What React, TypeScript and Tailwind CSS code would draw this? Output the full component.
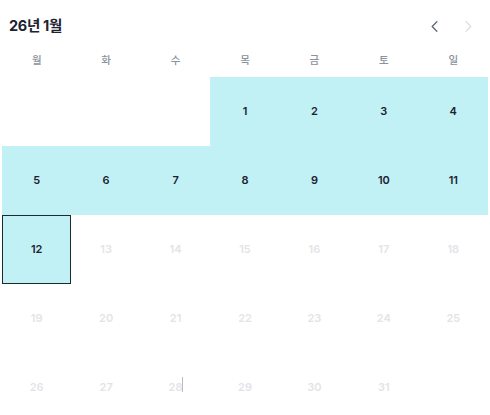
import { ChevronLeft, ChevronRight } from "lucide-react";

const WEEKDAYS = ["월", "화", "수", "목", "금", "토", "일"];

type Day = { day: number | null; inRange: boolean; selected: boolean; disabled: boolean };

const buildDays = (): Day[] => {
	const days: Day[] = [];
	for (let i = 0; i < 3; i++) days.push({ day: null, inRange: false, selected: false, disabled: false });
	for (let d = 1; d <= 31; d++) {
		days.push({ day: d, inRange: d <= 12, selected: d === 12, disabled: d > 12 });
	}
	return days;
};

const DayCell = ({ day, inRange, selected, disabled }: Day) => {
	if (day === null) return <div className="h-[69px]" />;
	return (
		<div
			className={`relative flex h-[69px] items-center justify-center text-[11px] font-semibold ${
				inRange ? "bg-[#c1f0f5]" : ""
			} ${selected ? "border border-[#1f2a30]" : ""} ${
				disabled ? "text-[#e3e4e8]" : "text-[#1c2230]"
			}`}
		>
			<span className="relative">
				{day}
				{day === 28 && <span className="absolute right-0 top-[-2px] h-[15px] w-px bg-[#b8bcc4]" />}
			</span>
		</div>
	);
};

export default function App() {
	const days = buildDays();
	return (
		<div className="h-[415px] w-[490px] overflow-hidden bg-white font-['Inter','Noto_Sans_CJK_KR',sans-serif]">
			<div className="flex h-[48px] items-center justify-between pl-[9px] pr-[12px] pt-[4px]">
				<h2 className="text-[14.5px] font-bold tracking-[-0.3px] text-[#1c2230]">26년 1월</h2>
				<div className="flex items-center gap-[15px]">
					<ChevronLeft size={19} strokeWidth={1.5} className="text-[#5b6270]" />
					<ChevronRight size={19} strokeWidth={1.5} className="text-[#dcdee2]" />
				</div>
			</div>
			<div className="grid grid-cols-7 px-[2px]">
				{WEEKDAYS.map((w) => (
					<div key={w} className="flex h-[29px] items-center justify-center pb-[3px] text-[10.5px] font-medium text-[#8c919b]">
						{w}
					</div>
				))}
				{days.map((d, i) => (
					<DayCell key={i} {...d} />
				))}
			</div>
		</div>
	);
}
